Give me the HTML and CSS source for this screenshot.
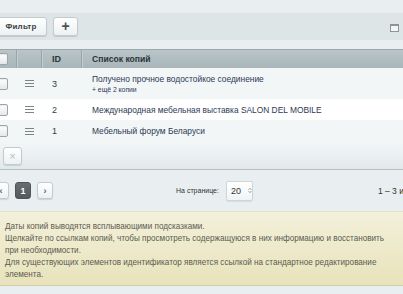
FILE: index.html
```html
<!DOCTYPE html>
<html lang="ru">
<head>
<meta charset="utf-8">
<link rel="stylesheet" href="styles.css">
</head>
<body>
<div class="page">
  <div class="top-strip"></div>
  <div class="toolbar">
    <button class="btn btn-filter">Фильтр</button>
    <button class="btn btn-add">+</button>
    <span class="spacer"></span>
    <span class="win-icon"></span>
  </div>
  <div class="gap"></div>
  <div class="grid">
    <div class="row head">
      <div class="c c1"><span class="cb"></span></div>
      <div class="c c2"></div>
      <div class="c c3">ID</div>
      <div class="c c4">Список копий</div>
    </div>
    <div class="row odd tall">
      <div class="c c1"><span class="cb"></span></div>
      <div class="c c2"><span class="burger"></span></div>
      <div class="c c3">3</div>
      <div class="c c4"><a class="lnk">Получено прочное водостойкое соединение</a><span class="more">+ ещё 2 копии</span></div>
    </div>
    <div class="row even">
      <div class="c c1"><span class="cb"></span></div>
      <div class="c c2"><span class="burger"></span></div>
      <div class="c c3">2</div>
      <div class="c c4"><a class="lnk">Международная мебельная выставка SALON DEL MOBILE</a></div>
    </div>
    <div class="row odd">
      <div class="c c1"><span class="cb"></span></div>
      <div class="c c2"><span class="burger"></span></div>
      <div class="c c3">1</div>
      <div class="c c4"><a class="lnk">Мебельный форум Беларуси</a></div>
    </div>
  </div>
  <div class="footer">
    <button class="btn btn-x">×</button>
  </div>
  <div class="pager">
    <button class="btn pbtn">‹</button>
    <button class="btn pbtn active">1</button>
    <button class="btn pbtn">›</button>
    <span class="per-page">На странице:</span>
    <span class="select">20<svg class="arrows" width="5" height="7" viewBox="0 0 5 7"><path d="M0.8 2.6 L2.5 0.9 L4.2 2.6 M0.8 4.4 L2.5 6.1 L4.2 4.4" fill="none" stroke="#666" stroke-width="0.9"/></svg></span>
    <span class="count">1 – 3 из 3</span>
  </div>
  <div class="note">
    Даты копий выводятся всплывающими подсказками.<br>
    Щелкайте по ссылкам копий, чтобы просмотреть содержащуюся в них информацию и восстановить при необходимости.<br>
    Для существующих элементов идентификатор является ссылкой на стандартное редактирование элемента.
  </div>
</div>
</body>
</html>
```

FILE: styles.css
```css
html, body {
  margin: 0;
  padding: 0;
  overflow: hidden;
  background: #e9eff1;
  font-family: "Liberation Sans", Arial, sans-serif;
}

.page {
  margin-left: -5px;
  width: 412px;
}

.top-strip {
  height: 13px;
  background: #e9eff1;
}

.toolbar {
  height: 27px;
  background: #dde5e7;
  display: flex;
  align-items: center;
  gap: 6px;
  padding-right: 8px;
}

.btn {
  font-family: "Liberation Sans", Arial, sans-serif;
  background: linear-gradient(#ffffff, #edf1f2);
  border: 1px solid #c3cbce;
  border-radius: 3px;
  box-shadow: 0 1px 1px rgba(0,0,0,0.12);
  color: #3b4447;
  padding: 0;
  margin: 0;
  cursor: pointer;
}

.btn-filter {
  width: 52px;
  height: 19px;
  font-size: 8px;
  font-weight: bold;
  letter-spacing: 0.2px;
}

.btn-add {
  width: 25px;
  height: 19px;
  font-size: 14px;
  font-weight: bold;
  line-height: 15px;
  color: #4a5356;
}

.spacer { flex: 1; }

.win-icon {
  width: 7px;
  height: 5px;
  border: 1px solid #8b9598;
  border-top-width: 2px;
  background: #f4f7f8;
  margin-top: 2px;
}

.gap {
  height: 9px;
  background: #e9eff1;
}

.grid {
  font-size: 8.4px;
  color: #333d4a;
}

.row {
  display: flex;
  align-items: center;
  height: 21px;
}

.row.head {
  height: 18px;
  border-top: 1px solid #9aa8ab;
  background: linear-gradient(#b9c5c8, #a9b6b9);
  color: #2c3538;
  font-weight: bold;
  font-size: 8.6px;
}

.row.tall { height: 31px; }
.row.odd { background: #f2f6f7; }
.row.even { background: #ffffff; height: 21px; }
.row.odd:last-child { height: 22px; }

.c {
  height: 100%;
  display: flex;
  align-items: center;
  box-sizing: border-box;
}

.c1 { width: 22px; padding-left: 1px; }
.c2 { width: 25px; justify-content: center; }
.c3 { width: 40px; padding-left: 10px; font-size: 9px; }
.c4 { flex: 1; padding-left: 10px; flex-direction: column; align-items: flex-start; justify-content: center; }

.head .c1, .head .c2, .head .c3 {
  border-right: 1px solid #99a6a9;
  box-shadow: 1px 0 0 #c3cdd0;
}

.cb {
  display: block;
  width: 10px;
  height: 10px;
  border: 1px solid #9ca6a9;
  border-radius: 2px;
  background: linear-gradient(#ffffff, #e4e8ea);
  box-shadow: inset 0 1px 1px rgba(0,0,0,0.08);
}

.burger {
  display: block;
  width: 9px;
  height: 1px;
  background: #7b8488;
  box-shadow: 0 3px 0 #7b8488, 0 6px 0 #7b8488;
  margin-top: -6px;
}

.lnk {
  color: #2c3a55;
  text-decoration: none;
  font-size: 8.4px;
}

.more {
  font-size: 6.8px;
  color: #2c3a55;
  margin-top: 2px;
}

.footer {
  height: 27px;
  background: linear-gradient(#f3f6f7, #e2e9eb);
  border-bottom: 1px solid #b4c0c3;
  display: flex;
  align-items: center;
  padding-left: 8px;
}

.btn-x {
  width: 19px;
  height: 18px;
  font-size: 11px;
  color: #b7bec1;
  line-height: 14px;
}

.pager {
  height: 41px;
  display: flex;
  align-items: center;
  background: #e9eff1;
  font-size: 7px;
  color: #333;
  white-space: nowrap;
}

.pbtn {
  width: 16px;
  height: 17px;
  font-size: 9px;
  font-weight: bold;
  margin-right: 6px;
  color: #5a6366;
  flex: none;
}

.pbtn:first-child { margin-left: -2px; }

.pbtn.active {
  background: linear-gradient(#676d71, #53595d);
  border-color: #4d5356;
  color: #ffffff;
  box-shadow: none;
}

.per-page {
  margin-left: 117px;
  white-space: nowrap;
  flex: none;
}

.select {
  margin-left: 7px;
  width: 27px;
  height: 20px;
  box-sizing: border-box;
  background: linear-gradient(#ffffff, #f1f4f5);
  border: 1px solid #cfd6d8;
  border-radius: 2px;
  box-shadow: 0 1px 1px rgba(0,0,0,0.08);
  font-size: 9px;
  display: flex;
  align-items: center;
  padding-left: 4px;
  color: #333;
  flex: none;
}

.arrows {
  margin-left: 7px;
}

.count {
  margin-left: 125px;
  font-size: 8.5px;
  white-space: nowrap;
  flex: none;
}

.note {
  margin-top: 0;
  height: 75px;
  box-sizing: border-box;
  padding: 9px 20px 0 10px;
  background: linear-gradient(#f3f0da, #e8e3bb);
  border-top: 1px solid #e6e2c7;
  border-bottom: 1px solid #d2cda4;
  font-size: 8.15px;
  line-height: 12px;
  color: #5b5b52;
}
```
